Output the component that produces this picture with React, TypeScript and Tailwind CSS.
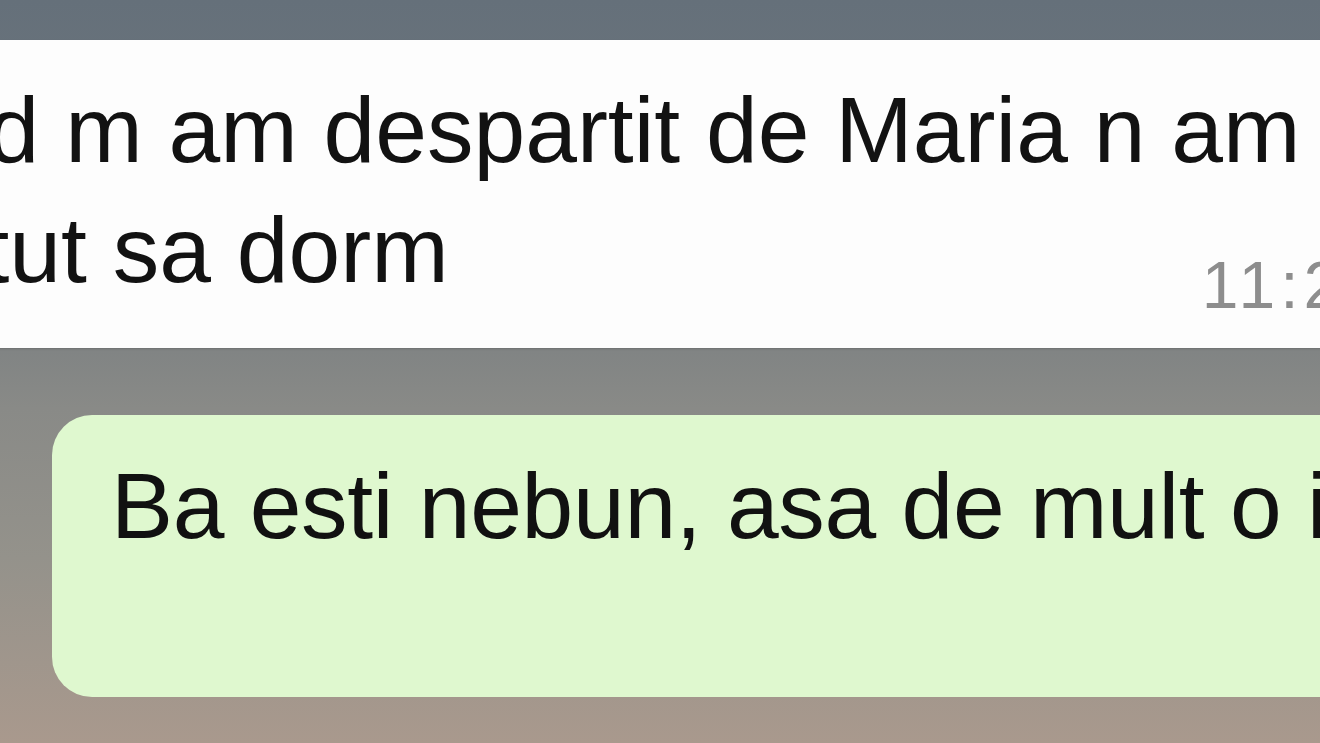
import React from "react";

export default function App() {
  const font = { fontFamily: '"Liberation Sans", Arial, sans-serif' };
  return (
    <div
      className="w-[1320px] h-[743px] overflow-hidden flex flex-col pt-[40px] bg-[linear-gradient(180deg,#65707a_0%,#6f777d_30%,#898a87_55%,#94928b_75%,#a9998d_100%)]"
      style={font}
    >
      {/* incoming white bubble */}
      <div className="shrink-0 w-[1610px] -ml-[200px] h-[308px] bg-[#fdfdfd] pl-[17px] pr-[23px] pt-[30px] text-[#121212] shadow-[0_1px_2px_rgba(0,0,0,0.15)] rounded-[36px]">
        <div className="text-[93px] leading-[120px] whitespace-nowrap">
          Cand m am despartit de Maria n am
        </div>
        <div className="flex justify-between items-start">
          <div className="ml-[63px] text-[93px] leading-[120px] whitespace-nowrap">
            putut sa dorm
          </div>
          <div className="mt-[62px] text-[66px] leading-[66px] text-[#8d8d8d] whitespace-nowrap tracking-[5px]">
            11:29
          </div>
        </div>
      </div>

      {/* outgoing green bubble */}
      <div className="shrink-0 mt-[67px] ml-[52px] w-[1400px] h-[282px] bg-[#dff8cf] rounded-l-[40px] pl-[59px] pt-[31px] text-[#111]">
        <div className="text-[93px] leading-[120px] whitespace-nowrap tracking-[-0.3px]">
          Ba esti nebun, asa de mult o iubeai
        </div>
      </div>
    </div>
  );
}
